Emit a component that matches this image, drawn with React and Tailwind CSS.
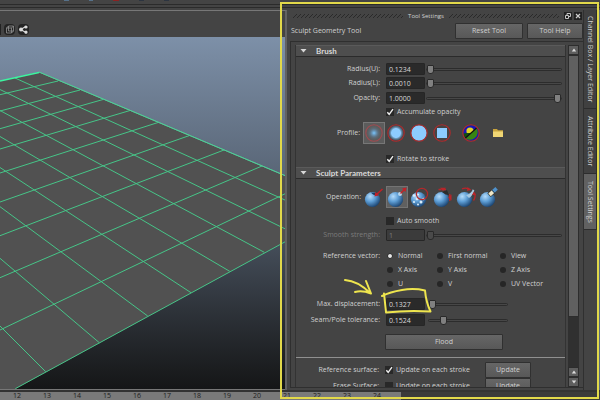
import clsx from "clsx";

const meshLines = [
  "M39 72L286 176", "M15 78L286 200.5", "M0 89.5L286 229.3", "M0 110.5L264.3 252.3",
  "M0 136.5L229.7 271.3", "M0 167.5L191 292.7", "M0 206.7L147.7 316", "M0 258.3L99.3 342.7",
  "M0 326L45.7 371.7", "M58 81L0 94.7", "M80 90L0 111", "M103 99.5L0 128.7",
  "M130 110.5L0 149", "M158 122.5L0 173", "M189.5 135.5L0 202", "M224 150L0 235.7",
  "M262 166L0 277.7", "M286 193.3L0 330", "M286 241.3L15.3 388.7",
];

const frames = [12, 13, 14, 15, 16, 17, 18, 19, 20, 21, 22, 23, 24];

const tabs = [
  { name: "Channel Box / Layer Editor", size: "h-[99px]" },
  { name: "Attribute Editor", size: "h-[65px]" },
  { name: "Tool Settings", size: "h-[56px]", active: true },
];

const vectors = [
  ["Normal", "First normal", "View"],
  ["X Axis", "Y Axis", "Z Axis"],
  ["U", "V", "UV Vector"],
];

function Button({ className, children }) {
  return (
    <button
      type="button"
      className={clsx(
        "flex items-center justify-center rounded-[1px] border border-[#303030] bg-linear-to-b from-[#666] to-[#585858] text-[#d0d0d0]",
        className
      )}
    >
      {children}
    </button>
  );
}

function Slider({ label, value, className, disabled }) {
  return (
    <input
      type="range"
      aria-label={label}
      defaultValue={value}
      disabled={disabled}
      className={clsx(
        "h-2 min-w-0 appearance-none bg-transparent",
        "[&::-webkit-slider-runnable-track]:h-[3px] [&::-webkit-slider-runnable-track]:rounded-sm [&::-webkit-slider-runnable-track]:border [&::-webkit-slider-runnable-track]:border-[#2c2c2c] [&::-webkit-slider-runnable-track]:bg-[#474747]",
        "[&::-webkit-slider-thumb]:-mt-[4px] [&::-webkit-slider-thumb]:h-[9px] [&::-webkit-slider-thumb]:w-[7px] [&::-webkit-slider-thumb]:appearance-none [&::-webkit-slider-thumb]:rounded-b-[3px] [&::-webkit-slider-thumb]:rounded-t-[1px] [&::-webkit-slider-thumb]:border [&::-webkit-slider-thumb]:border-[#292929]",
        disabled
          ? "[&::-webkit-slider-thumb]:bg-[#4a4a4a]"
          : "[&::-webkit-slider-thumb]:bg-[#808080]",
        className
      )}
    />
  );
}

function FieldRow({ id, label, text, value, short, disabled, className }) {
  return (
    <div className={clsx("flex h-[14px] items-center pr-[3px]", className)}>
      <label
        htmlFor={id}
        className={clsx("mr-[6px] w-[84px] text-right whitespace-nowrap", disabled && "text-[#7b7b7b]")}
      >
        {label}
      </label>
      <input
        id={id}
        type="text"
        defaultValue={text}
        disabled={disabled}
        className={clsx(
          "h-[12px] w-[39px] rounded-[1px] border border-[#262626] pl-[2px]",
          disabled ? "bg-[#3b3b3b] text-[#7b7b7b]" : "bg-[#2a2a2a] text-[#d8d8d8]"
        )}
      />
      <Slider
        label={`${label} slider`}
        value={value}
        disabled={disabled}
        className={short ? "ml-[3px] w-[80px]" : "ml-px flex-1"}
      />
    </div>
  );
}

function Check({ label, checked, className }) {
  return (
    <label className={clsx("relative flex items-center gap-[3px] whitespace-nowrap", className)}>
      <input
        type="checkbox"
        defaultChecked={checked}
        className="peer size-[8px] appearance-none bg-[#282828]"
      />
      <svg
        viewBox="0 0 8 8"
        className="absolute left-0 hidden size-[8px] fill-none stroke-[#eee] stroke-[1.4] peer-checked:block"
      >
        <path d="M1.3 4.2L3.2 6.3L7 1.2" />
      </svg>
      {label}
    </label>
  );
}

function SectionHeader({ children }) {
  return (
    <button
      type="button"
      className="flex h-[14px] w-full items-center gap-[9px] border-t border-b border-t-[#5a5a5a] border-b-[#2b2b2b] bg-[#4e4e4e] pl-[4px] font-['Lato','Liberation_Sans',sans-serif] text-[8px] font-bold text-[#d8d8d8]"
    >
      <svg viewBox="0 0 7 4" className="h-1 w-[7px] fill-[#d8d8d8]">
        <path d="M0.5 0H6.5L3.5 3.6Z" />
      </svg>
      {children}
    </button>
  );
}

function Hatch() {
  return (
    <div className="h-[4px] flex-1 bg-[linear-gradient(135deg,transparent_38%,#2a2a2a_38%,#2a2a2a_62%,transparent_62%)] bg-size-[4px_4px]" />
  );
}

/* ==================== PROFILE ICONS ==================== */
function Profile({ kind }) {
  return (
    <svg viewBox="0 0 18 18" className="size-[18px]">
      <defs>
        <radialGradient id="soft">
          <stop offset="0.1" stopColor="#74b4e4" />
          <stop offset="0.55" stopColor="#5d7990" stopOpacity="0.7" />
          <stop offset="1" stopColor="#5d6265" stopOpacity="0" />
        </radialGradient>
        <radialGradient id="medium">
          <stop offset="0.6" stopColor="#8dccff" />
          <stop offset="1" stopColor="#4c6f8c" stopOpacity="0.3" />
        </radialGradient>
      </defs>
      {kind === "soft" && <circle cx="9" cy="9" r="7.5" fill="url(#soft)" />}
      {kind === "medium" && <circle cx="9" cy="9" r="7.5" fill="url(#medium)" />}
      {kind === "solid" && <circle cx="9" cy="9" r="7.8" fill="#8dccff" />}
      {kind === "square" && <rect x="4" y="4" width="10" height="10" fill="#8dccff" />}
      {kind === "picture" && (
        <>
          <circle cx="9" cy="9" r="7.8" fill="#1717b8" />
          <circle cx="8" cy="7" r="3.6" fill="#e2d32b" />
          <path d="M3.2 14.2L14.6 4A7.8 7.8 0 0 1 3.2 14.2Z" fill="#388414" />
          <path d="M1.4 9.6L5 9L9 9L3.2 14.2A7.8 7.8 0 0 1 1.4 9.6Z" fill="#14500c" />
          <path d="M3.2 14.2L14.6 4" stroke="#111" strokeWidth="1.2" />
        </>
      )}
      <circle cx="9" cy="9" r="8.2" fill="none" stroke={kind === "soft" ? "#a34a50" : "#b12a2c"} strokeWidth="1.1" />
    </svg>
  );
}

/* ==================== OPERATION ICONS ==================== */
function Operation({ kind }) {
  return (
    <svg viewBox="0 0 22 22" className="size-[22px]">
      <defs>
        <radialGradient id="ball" cx="0.35" cy="0.3" r="0.75">
          <stop offset="0" stopColor="#b5dcfa" />
          <stop offset="0.45" stopColor="#5f9fd6" />
          <stop offset="1" stopColor="#173f6c" />
        </radialGradient>
      </defs>
      <circle cx="9.5" cy="13.5" r="7.6" fill="url(#ball)" />
      {kind === "push" && (
        <>
          <path d="M8 6.5Q10 10 15.5 9.5L13 6.8Z" fill="#1d3e62" />
          <path d="M19.5 3L13.5 8.5" stroke="#c42127" strokeWidth="1.5" />
          <path d="M11.5 10.5L12.3 6L16 9.3Z" fill="#c42127" />
        </>
      )}
      {kind === "pull" && (
        <>
          <circle cx="14" cy="8" r="2" fill="#b9d5ea" />
          <path d="M14.5 7.5L18 4" stroke="#c42127" strokeWidth="1.5" />
          <path d="M20.5 1.5L19.6 6L16 2.6Z" fill="#c42127" />
        </>
      )}
      {kind === "smooth" && (
        <>
          <g fill="#d9ecfa">
            <circle cx="5" cy="9.5" r="1.3" />
            <circle cx="8" cy="13" r="1.3" />
            <circle cx="5" cy="16" r="1.1" />
            <circle cx="12" cy="16" r="1.5" />
            <circle cx="9" cy="18.5" r="1" />
            <circle cx="14.5" cy="13" r="1.2" />
            <circle cx="9" cy="8.5" r="1.1" />
          </g>
          <circle cx="13" cy="8" r="5.6" fill="none" stroke="#b12a2c" strokeWidth="1.2" />
        </>
      )}
      {kind === "relax" && (
        <>
          <path d="M10 6L15 4L17 9L13.5 8.5Z" fill="#2d2d2d" />
          <path d="M6.5 3.5H14.5M17.8 8V15" stroke="#b9252a" strokeWidth="1.3" strokeDasharray="3 1.5" />
          <path d="M8 1.8L11 5L14 1.8ZM19.5 8.5L16 11.5L19.5 14.5Z" fill="#b9252a" />
        </>
      )}
      {kind === "pinch" && (
        <>
          <path d="M11 9Q16.5 7.5 17.8 3.2L19.3 4.5Q17.5 10 14 12Z" fill="#a8c9e2" />
          <path d="M7 2.8Q12 1 15.5 4M19.5 7Q21 11 18.5 14.5" fill="none" stroke="#b9252a" strokeWidth="1.3" />
          <path d="M12.5 1L16 3.8L12 5ZM17 9L19 5.5L21 9Z" fill="#b9252a" />
        </>
      )}
      {kind === "erase" && (
        <>
          <path d="M11 9.2L15 5.6" stroke="#332f25" strokeWidth="5" />
          <path d="M11.5 8.8L15 5.6" stroke="#efe8c9" strokeWidth="3.6" />
          <path d="M15 5.6L18.6 2.4" stroke="#4f91cb" strokeWidth="3.6" />
          <path d="M14 4.2L16.6 6.9" stroke="#1b2835" strokeWidth="0.8" />
        </>
      )}
    </svg>
  );
}

function Viewport() {
  return (
    <section className="flex min-w-0 flex-1 flex-col border-t border-r-2 border-t-[#777] border-r-[#626262]">
      <div className="flex h-[26px] items-end gap-[3px] pb-[2px]">
        <div className="h-[11px] w-px bg-[#222]" />
        <button type="button" aria-label="Wireframe cube" className="size-[11px] rounded-sm bg-[#242424]">
          <svg viewBox="0 0 11 11" className="fill-none stroke-[#929292] stroke-[0.8]">
            <path d="M2.5 4H7.5V9H2.5ZM4.5 2H9.5V7H4.5ZM2.5 4L4.5 2M7.5 4L9.5 2M7.5 9L9.5 7" />
          </svg>
        </button>
        <button type="button" aria-label="Share view" className="size-[11px] rounded-sm bg-[#242424]">
          <svg viewBox="0 0 11 11" className="fill-[#ddd] stroke-[#ddd] stroke-[1.2]">
            <path d="M2.5 5.5L8 2.5M2.5 5.5L8 8.5" />
            <circle cx="3" cy="5.5" r="1.3" />
            <circle cx="8" cy="3" r="1" />
            <circle cx="8" cy="8.2" r="1" />
          </svg>
        </button>
      </div>
      <div className="min-h-0 flex-1 overflow-hidden border-b border-[#777] bg-linear-to-b from-[#7d90a8] via-[#505b6a] to-[#151617]">
        <svg viewBox="0 37 286 352" preserveAspectRatio="xMinYMin slice" className="size-full">
          <path d="M0 81L39 72L286 176V241.3L15.3 389H0Z" fill="#515151" />
          <path d={meshLines.join("")} fill="none" stroke="#46c588" strokeWidth="1" />
          <path d="M0 81L39 72.5" stroke="#3df5a0" strokeWidth="1.6" />
          <path d="M39 72L286 176" stroke="#55c99a" strokeWidth="1" />
        </svg>
      </div>
    </section>
  );
}

function ScrollButton({ down }) {
  return (
    <button
      type="button"
      aria-label={down ? "Scroll down" : "Scroll up"}
      className="flex h-[10px] items-center justify-center border border-[#2d2d2d] bg-[#5e5e5e]"
    >
      <svg viewBox="0 0 6 4" className="h-1 w-1.5 fill-[#ddd]">
        {down ? <path d="M0.8 0.5H5.2L3 3.5Z" /> : <path d="M0.8 3.5H5.2L3 0.5Z" />}
      </svg>
    </button>
  );
}

function ScrollBar() {
  return (
    <div className="flex w-[11px] flex-col bg-[#303030]">
      <ScrollButton />
      <div className="flex h-[262px] items-center justify-center border border-[#2d2d2d] bg-[#606060]">
        <div className="h-[12px] w-[8px] bg-[radial-gradient(circle,#333_35%,transparent_50%)] bg-size-[2px_2px]" />
      </div>
      <div className="flex-1" />
      <ScrollButton />
      <ScrollButton down />
    </div>
  );
}

function SurfaceRow({ label, checked }) {
  return (
    <div className="flex h-[16px] shrink-0 items-center">
      <span className="mr-[6px] w-[83px] text-right whitespace-nowrap">{label}</span>
      <Check label="Update on each stroke" checked={checked} className="w-[100px]" />
      <Button className="h-[16px] w-[46px]">Update</Button>
    </div>
  );
}

function ToolSettings() {
  return (
    <div className="flex min-w-0 flex-1 flex-col pl-[3px]">
      {/* Title bar */}
      <div className="flex h-[12px] items-center gap-[5px] pr-px pl-[3px]">
        <Hatch />
        <h1 className="text-[6px] whitespace-nowrap">Tool Settings</h1>
        <Hatch />
        <div className="flex gap-[2px]">
          <button type="button" aria-label="Float" className="size-[8px] bg-[#222]">
            <svg viewBox="0 0 8 8" className="fill-none stroke-[#c4c4c4] stroke-1">
              <path d="M3 3V1.5H6.5V4.5H5M1.5 3.5H4.5V6.5H1.5Z" />
            </svg>
          </button>
          <button type="button" aria-label="Close" className="size-[8px] bg-[#222]">
            <svg viewBox="0 0 8 8" className="fill-none stroke-[#ccc] stroke-[1.2]">
              <path d="M2 2L6 6M6 2L2 6" />
            </svg>
          </button>
        </div>
      </div>

      <div className="mt-px flex h-[16px] items-center gap-[4px] pl-[1px]">
        <h2 className="flex-1">Sculpt Geometry Tool</h2>
        <Button className="h-[16px] w-[68px]">Reset Tool</Button>
        <Button className="h-[16px] w-[56px]">Tool Help</Button>
      </div>

      {/* Scroll area */}
      <div className="mt-[2px] mb-[2px] flex min-h-0 flex-1 gap-[2px] border-t border-b border-l border-[#2f2f2f] pt-[3px] pr-[4px] pl-[4px]">
        <div className="flex min-w-0 flex-1 flex-col overflow-hidden border-x border-[#333]">
          <SectionHeader>Brush</SectionHeader>
          <div className="flex flex-col pt-[5px] pb-px">
            <FieldRow id="radius-u" label="Radius(U):" text="0.1234" value={0} />
            <FieldRow id="radius-l" label="Radius(L):" text="0.0010" value={0} />
            <FieldRow id="opacity" label="Opacity:" text="1.0000" value={100} className="mt-px" />
            <Check label="Accumulate opacity" checked className="ml-[90px] h-[14px]" />
            <div className="mt-[3px] flex h-[22px] items-center">
              <span className="mr-[3px] w-[64px] text-right">Profile:</span>
              <button type="button" aria-label="Soft profile" className="mr-[2px] flex size-[22px] items-center justify-center border border-[#777] bg-[#5c5c5c]">
                <Profile kind="soft" />
              </button>
              <div className="flex gap-[5px]">
                <button type="button" aria-label="Medium profile"><Profile kind="medium" /></button>
                <button type="button" aria-label="Solid profile"><Profile kind="solid" /></button>
                <button type="button" aria-label="Square profile"><Profile kind="square" /></button>
              </div>
              <button type="button" aria-label="Image profile" className="ml-[11px]"><Profile kind="picture" /></button>
              <button type="button" aria-label="Browse" className="ml-[12px]">
                <svg viewBox="0 0 12 10" className="h-[10px] w-[12px]">
                  <path d="M1 1H5L6 2.3H11V9H1Z" fill="#c9a43c" />
                  <path d="M1 3.5H11V9H1Z" fill="#f0d674" />
                </svg>
              </button>
            </div>
            <Check label="Rotate to stroke" checked className="mt-2 ml-[90px] h-[14px]" />
          </div>

          <SectionHeader>Sculpt Parameters</SectionHeader>
          <div className="flex flex-col pt-[7px]">
            <div className="flex h-[22px] items-center">
              <span className="mr-[2px] w-[65px] text-right">Operation:</span>
              <div className="flex gap-px">
                {["push", "pull", "smooth", "relax", "pinch", "erase"].map((kind) => (
                  <button
                    key={kind}
                    type="button"
                    aria-label={kind}
                    className={clsx("size-[22px]", kind === "pull" && "bg-[#606060] outline -outline-offset-1 outline-[#747474]")}
                  >
                    <Operation kind={kind} />
                  </button>
                ))}
              </div>
            </div>
            <Check label="Auto smooth" className="mt-[6px] ml-[90px] h-[14px]" />
            <FieldRow id="smooth" label="Smooth strength:" text="1" value={0} disabled />

            <fieldset className="mt-[7px] flex">
              <legend className="float-left mr-[7px] h-[14px] w-[84px] text-right leading-[14px] whitespace-nowrap">
                Reference vector:
              </legend>
              <div className="flex flex-col">
                {vectors.map((row) => (
                  <div key={row[0]} className="grid h-[14px] grid-cols-[50px_63px_50px] items-center">
                    {row.map((name) => (
                      <label key={name} className="flex items-center gap-[5px] whitespace-nowrap">
                        <input
                          type="radio"
                          name="vector"
                          defaultChecked={name === "Normal"}
                          className="size-[6px] appearance-none rounded-full bg-[#262626] checked:border checked:border-[#262626] checked:bg-[#e8e8e8]"
                        />
                        {name}
                      </label>
                    ))}
                  </div>
                ))}
              </div>
            </fieldset>

            <FieldRow id="max" label="Max. displacement:" text="0.1327" value={0} short className="mt-[6px]" />
            <FieldRow id="seam" label="Seam/Pole tolerance:" text="0.1524" value={15} short className="mt-[2px]" />
            <Button className="mt-[7px] ml-[89px] h-[16px] w-[118px]">Flood</Button>
            <hr className="mt-[7px] border-t border-[#909090]" />
            <div className="mt-[4px] flex flex-col">
              <SurfaceRow label="Reference surface:" checked />
              <SurfaceRow label="Erase Surface:" />
            </div>
          </div>
        </div>
        <ScrollBar />
      </div>
    </div>
  );
}

export default function App() {
  return (
    <div className="relative flex h-screen flex-col overflow-hidden bg-[#444] font-['Open_Sans','Liberation_Sans',sans-serif] text-[7px] leading-[10px] text-[#d0d0d0]">
      {/* Shelf bottom edge */}
      <div className="flex h-[10px] flex-col justify-between pb-[2px]">
        <div className="flex h-px gap-[20px] pl-[64px]">
          <div className="w-[5px] bg-[#56718a]" />
          <div className="w-[4px] bg-[#56718a]" />
          <div className="w-[6px] bg-[#8a2222]" />
          <div className="w-[5px] bg-[#2c3440]" />
          <div className="w-[5px] bg-[#2c3440]" />
        </div>
        <div className="h-[4px] border-y border-[#2b2b2b]" />
      </div>

      <main className="flex min-h-0 flex-1">
        <Viewport />
        <aside className="flex w-[313px]">
          <ToolSettings />
          <nav className="flex w-[14px] flex-col border-l border-[#303030]">
            {tabs.map((tab) => (
              <button
                key={tab.name}
                type="button"
                className={clsx(
                  "flex items-center justify-center border-r border-b border-[#2d2d2d] whitespace-nowrap [writing-mode:vertical-rl]",
                  tab.size,
                  tab.active ? "bg-[#616161]" : "bg-[#404040]"
                )}
              >
                {tab.name}
              </button>
            ))}
          </nav>
          <div className="w-[3px] bg-[#5c6b7c]" />
        </aside>
      </main>

      {/* Time ruler */}
      <div className="flex h-[10px] overflow-hidden border-t-2 border-[#333] bg-[#3a3a3a] text-[#202020]">
        <div className="flex w-[401px] bg-[#7a7a7a] pl-[2px]">
          {frames.map((frame) => (
            <span key={frame} className="w-[30px] text-center leading-[8px]">{frame}</span>
          ))}
        </div>
      </div>

      {/* Marker annotations */}
      <div className="pointer-events-none absolute top-[2px] right-px bottom-[1px] w-[319px] border-2 border-[#e2d94a]" />
      <svg
        viewBox="280 0 320 400"
        className="pointer-events-none absolute top-0 right-0 h-[400px] w-[320px] fill-none stroke-[#eee54e] stroke-2"
        strokeLinecap="round"
        strokeLinejoin="round"
      >
        <path d="M345 280Q358 281 370 293M366 281L371 293.5Q362 290 355 292" />
        <path d="M384 293.5Q385 303 386 312M382 296Q390 292 402 290T425 290.5Q426 302 430.5 311.5Q408 310 386 312.5" />
      </svg>
    </div>
  );
}
